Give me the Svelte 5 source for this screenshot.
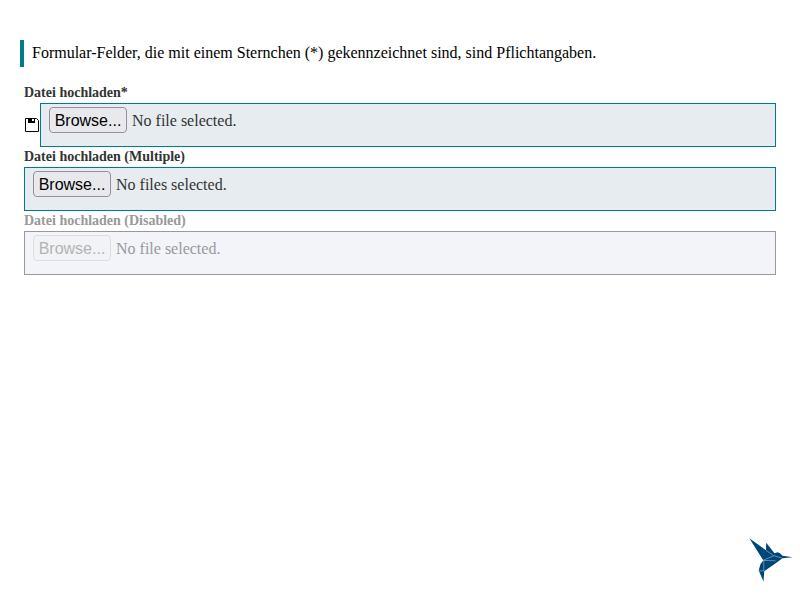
<script>
  const fields = [
    { label: 'Datei hochladen*', status: 'No file selected.', icon: true, disabled: false },
    { label: 'Datei hochladen (Multiple)', status: 'No files selected.', icon: false, disabled: false },
    { label: 'Datei hochladen (Disabled)', status: 'No file selected.', icon: false, disabled: true }
  ];
</script>

<main>
  <p class="hint">Formular-Felder, die mit einem Sternchen (*) gekennzeichnet sind, sind Pflichtangaben.</p>
  <form>
    {#each fields as field}
      <div class="field" class:disabled={field.disabled}>
        <div class="label">{field.label}</div>
        <div class="row">
          {#if field.icon}
            <svg class="disk" width="16" height="16" viewBox="0 0 16 16">
              <path d="M1.5 1.5h11l2 2v11h-13z" fill="#fff" stroke="#000" />
              <path d="M4 1h7v5H4z" />
              <path d="M8 2h2v2H8z" fill="#fff" />
            </svg>
          {/if}
          <div class="control">
            <button type="button" disabled={field.disabled}>Browse...</button>
            <span>{field.status}</span>
          </div>
        </div>
      </div>
    {/each}
  </form>
  <svg class="bird" width="44" height="44" viewBox="0 0 44 44">
    <path
      fill="#004578"
      d="M.3.3L17 12.3L17.2 4.8L25.5 15.2L28.5 14.3L31 15.2L33.5 17.8L43.7 19.2L33.5 20.2L27 25L15.2 33.2L14.5 43.5L9.7 32.5L11.5 26L14.4 22.6Z"
    />
    <path
      d="M17 12.3L24.5 17.7M14 22.4L25 17.7L33 20M14 22.4L26.5 22.8M14.8 22.5V32.8L9.5 32.8"
      fill="none"
      stroke="#a9c0d2"
      stroke-width=".6"
    />
  </svg>
</main>

<style>
  :global(body) {
    margin: 0;
    background: #fff;
  }
  main {
    box-sizing: border-box;
    height: 600px;
    padding: 40px 20px 0;
    font-family: "Liberation Serif", serif;
    font-size: 16px;
    color: #000;
  }
  .hint {
    box-sizing: border-box;
    height: 27px;
    margin: 0 0 18px;
    padding-left: 8px;
    border-left: 4px solid #007c87;
    line-height: 25px;
    white-space: nowrap;
  }
  form {
    padding: 0 4px;
  }
  .field {
    height: 64px;
    color: #333;
  }
  .label {
    height: 18px;
    line-height: 15px;
    font-size: 14px;
    font-weight: bold;
  }
  .row {
    display: flex;
    align-items: center;
  }
  .disk {
    flex: none;
  }
  .control {
    box-sizing: border-box;
    flex: 1;
    display: flex;
    align-items: flex-start;
    gap: 5px;
    height: 44px;
    padding: 3px 8px;
    border: 1px solid #007c87;
    background: #e7ecf0;
  }
  button {
    box-sizing: border-box;
    width: 78px;
    height: 26px;
    padding: 2px 0 0;
    border: 1px solid #8f8f9d;
    border-radius: 4px;
    background: #e9e9ed;
    color: #000;
    font: 16px/22px "Liberation Sans", sans-serif;
  }
  .control span {
    line-height: 28px;
  }
  .disabled {
    color: #999;
  }
  .disabled .control {
    border-color: #999;
    background: #f3f4f9;
  }
  .disabled button {
    color: #b3b3b3;
    border-color: #dddde2;
    background: #f2f3f6;
  }
  .bird {
    position: absolute;
    left: 749px;
    top: 538px;
  }
</style>
